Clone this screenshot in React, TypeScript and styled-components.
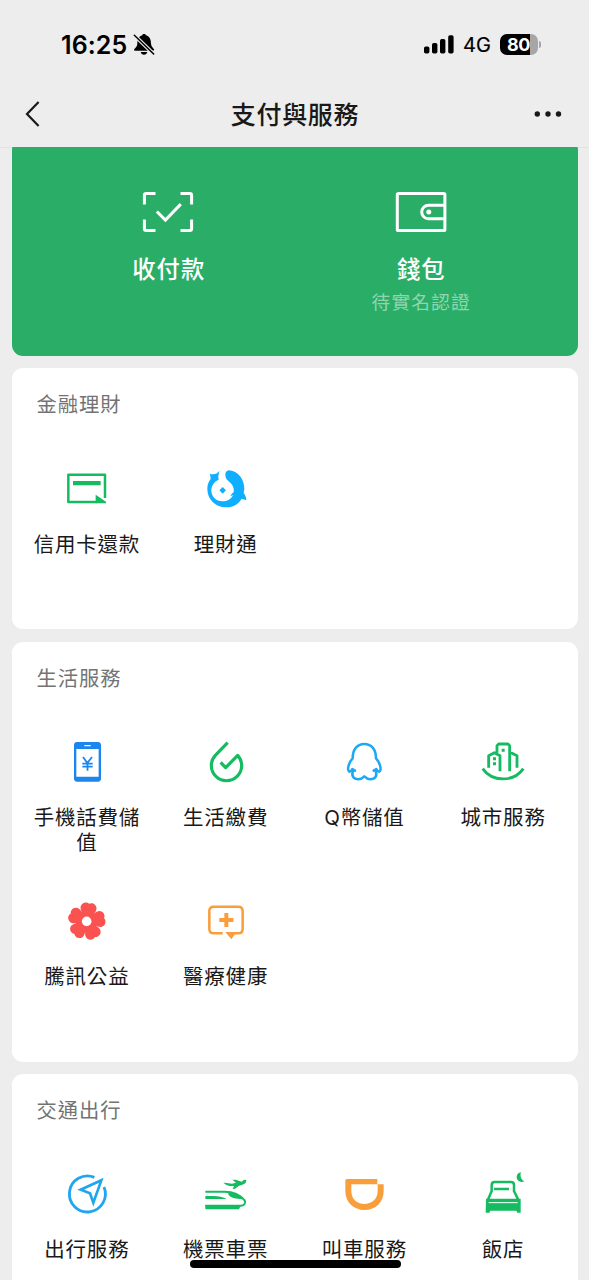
import React from "react";
import styled, { createGlobalStyle } from "styled-components";

const GlobalStyle = createGlobalStyle`
  *, *::before, *::after { box-sizing: border-box; }
  body {
    margin: 0;
    background: #ededed;
    font-family: Inter, "Noto Sans CJK TC", sans-serif;
    color: #191919;
  }
`;

const GREEN = "#14bb60";
const BLUE = "#10aeff";
const ORANGE = "#fa9d3b";

const Screen = styled.div`
  position: relative;
  width: 589px;
  height: 1280px;
  overflow: hidden;
  display: flex;
  flex-direction: column;
  background: #ededed;
`;

const StatusBar = styled.div`
  height: 82px;
  flex: none;
  padding: 7px 48px 0 61px;
  display: flex;
  align-items: center;
  justify-content: space-between;
  color: #000;
`;

const StatusGroup = styled.div`
  display: flex;
  align-items: center;
`;

const Clock = styled.span`
  font-size: 25px;
  font-weight: 600;
  line-height: 30px;
  letter-spacing: 0.1px;
  width: 72px;
`;

const Network = styled.span`
  font-size: 20px;
  line-height: 24px;
  margin: 1px 9px 0 9px;
  width: 28px;
  -webkit-text-stroke: 0.2px #000;
`;

const Battery = styled.div`
  width: 38px;
  height: 21px;
  border-radius: 7px;
  background: linear-gradient(to right, #000 30px, #a6a6a6 30px);
  color: #fff;
  font-size: 18px;
  font-weight: 700;
  line-height: 21px;
  padding-left: 7px;
  letter-spacing: -0.4px;
`;

const BatteryTip = styled.div`
  width: 2px;
  height: 7px;
  margin-left: 1px;
  border-radius: 0 3px 3px 0;
  background: #a6a6a6;
`;

const NavBar = styled.header`
  height: 65px;
  flex: none;
  padding: 0 27px 1px 24px;
  display: grid;
  grid-template-columns: 60px 1fr 60px;
  align-items: center;
  svg { display: block; }
  svg:last-child { justify-self: end; }
`;

const PageTitle = styled.h1`
  margin: 2px 0 0 4px;
  text-align: center;
  font-size: 25px;
  font-weight: 500;
  line-height: 32px;
  letter-spacing: 0.7px;
`;

const Content = styled.main`
  flex: 1;
  min-height: 0;
  overflow: hidden;
  box-shadow: inset 0 1px 0 #e2e2e2;
  padding: 0 11px 0 12px;
  display: flex;
  flex-direction: column;
  gap: 12.3px;
`;

const WalletCard = styled.section`
  flex: none;
  height: 217px;
  margin-top: -8px;
  padding: 49px 31px 0 30px;
  border-radius: 11px;
  background: #2aae67;
  color: #fff;
  display: grid;
  grid-template-columns: 1fr 1fr;
`;

const WalletItem = styled.div`
  display: flex;
  flex-direction: column;
  align-items: center;
  svg { display: block; }
`;

const WalletLabel = styled.div`
  margin-top: 18px;
  font-size: 23.3px;
  font-weight: 500;
  line-height: 32px;
  letter-spacing: 1px;
  margin-right: -1px;
`;

const WalletNote = styled.div`
  margin-top: 5px;
  font-size: 18.7px;
  line-height: 24px;
  letter-spacing: 1.2px;
  margin-right: -1px;
  color: #8fd5af;
`;

const Card = styled.section`
  flex: none;
  background: #fff;
  border-radius: 11px;
  padding: 25px 5.5px 5px;
`;

const CardTitle = styled.h2`
  margin: 0 0 47.5px 19px;
  font-size: 20.3px;
  font-weight: 400;
  line-height: 24px;
  letter-spacing: 1px;
  color: #737373;
`;

const Services = styled.div`
  display: grid;
  grid-template-columns: repeat(4, 1fr);
  grid-auto-rows: 159px;
  margin-bottom: 0.5px;
`;

const Service = styled.div`
  display: flex;
  flex-direction: column;
  align-items: center;
`;

const Glyph = styled.svg`
  display: block;
  width: 48px;
  height: 48px;
  flex: none;
`;

const ServiceLabel = styled.div`
  width: 110px;
  margin-top: 19px;
  text-align: center;
  font-size: 20.5px;
  line-height: 25px;
  letter-spacing: 0.8px;
`;

const HomeIndicator = styled.div`
  position: absolute;
  left: 190px;
  bottom: 12px;
  width: 211px;
  height: 8px;
  border-radius: 4px;
  background: #000;
`;

const BellOff = () => (
  <svg width="22" height="24" viewBox="0 0 66 72">
    <path d="M33 3c4 0 5 2 6 4 12 4 15 14 15 25 0 8 7 13 9 17 1 3-1 4-3 4H6c-2 0-4-2-2-5 4-5 9-8 9-16 0-11 3-21 15-25 0-2 1-4 5-4z" fill="#000" />
    <path d="M23 57h20c-1 5-5 8-10 8s-9-3-10-8z" fill="#000" />
    <path d="M2 5l62 60" stroke="#ededed" strokeWidth="11" />
    <path d="M4 7l58 56" stroke="#000" strokeWidth="4.5" strokeLinecap="round" />
  </svg>
);

const Signal = () => (
  <svg width="30" height="19" viewBox="0 0 30 19">
    <rect x="0" y="11.5" width="5.4" height="7" rx="1.8" />
    <rect x="8" y="8" width="5.4" height="10.5" rx="1.8" />
    <rect x="16" y="4" width="5.4" height="14.5" rx="1.8" />
    <rect x="24.2" y="0.3" width="5.4" height="18.2" rx="1.8" />
  </svg>
);

const CardIcon = () => (
  <Glyph viewBox="0 0 144 144" fill="none">
    <path d="M126 99V29H16v82h86" stroke={GREEN} strokeWidth="7.5" strokeLinejoin="round" />
    <path d="M30 48h83v13H30zM98 89l31 21v5H98z" fill={GREEN} />
  </Glyph>
);

const FishIcon = () => (
  <Glyph viewBox="0 0 144 144" fill={BLUE}>
    <path d="M70 28C70 20 76 16 82 16C110 19 127 45 127 72L125 84C130 90 133 98 133 106L119 101C110 116 95 127 73 127C40 127 16 103 16 72C16 58 20 50 26 42L24 26C35 30 45 27 53 17C49 27 48 36 50 44C38 49 28 60 28 76C28 96 43 109 61 109C75 109 88 102 93 90L85 94C87 88 90 85 95 82C97 68 91 58 80 49C72 43 70 36 70 28Z" />
    <rect x="55" y="69" width="14" height="14" rx="2" transform="rotate(45 62 76)" />
  </Glyph>
);

const PhoneIcon = () => (
  <Glyph viewBox="0 0 144 144">
    <path fillRule="evenodd" fill="#1d86ec" d="M41 12h65c4 0 8 4 8 8v103c0 4-4 8-8 8H41c-4 0-8-4-8-8V20c0-4 4-8 8-8zM40 33v83h67V33zM64 21v4h19v-4z" />
    <path d="M60 57l13 18 14-18M73.5 75v23M58 77h31M58 86h31" fill="none" stroke="#1d86ec" strokeWidth="5.5" />
  </Glyph>
);

const DropIcon = () => (
  <Glyph viewBox="0 0 144 144" fill="none" stroke={GREEN} strokeWidth="9.5">
    <path d="M77 14L40 52a45.500 45.500 0 1 0 67 0l-36 37-15-16" strokeLinejoin="round" />
  </Glyph>
);

const PenguinIcon = () => (
  <Glyph viewBox="0 0 144 144" fill="none" stroke="#1ba8f5" strokeWidth="7.5" strokeLinejoin="round" strokeLinecap="round">
    <path d="M45 98l-8-5c-3 6-6 9-9 8-8-5-2-27 10-40 0-25 12-43 35-43s35 18 35 43c12 13 18 35 10 40-3 1-6-2-9-8l-8 5" />
    <path d="M39 100c-6 14 2 24 16 24 8 0 13-4 18-9 5 5 10 9 18 9 14 0 22-10 16-24" />
  </Glyph>
);

const CityIcon = () => (
  <Glyph viewBox="0 0 144 144" fill="none" stroke={GREEN} strokeWidth="8.5">
    <path d="M29 89V53l17-9 17 9v47M54 44V23l5-5h28l5 5v77M92 42l22 11v36" strokeLinejoin="round" />
    <path d="M11 92c28 41 94 41 122 0" />
    <path d="M42 58h9v9h-9zM42 73h9v9h-9zM68 32h9v9h-9z" fill={GREEN} stroke="none" />
  </Glyph>
);

const FlowerIcon = () => (
  <Glyph viewBox="0 0 144 144" fill="#fa5151">
    <g transform="translate(71 73)">
      <circle r="33" />
      {[8, 80, 152, 224, 296].map((angle) => (
        <path
          key={angle}
          transform={`rotate(${angle})`}
          d="M0 0L-14 -20C-20 -27 -25 -34 -24 -42C-22 -55 -8 -59 0 -53C8 -59 22 -55 24 -42C25 -34 20 -27 14 -20Z"
        />
      ))}
      <circle r="14.5" fill="#fff" />
    </g>
  </Glyph>
);

const MedicalIcon = () => (
  <Glyph viewBox="0 0 144 144" fill="none">
    <path d="M62 109H35q-13 0-13-13V42q0-13 13-13h74q13 0 13 13v54q0 13-13 13H96" stroke={ORANGE} strokeWidth="7.5" />
    <path d="M67 48h12v15h15v12H79v15H67V75H52V63h15zM70 105h29v6l-11 16z" fill={ORANGE} />
  </Glyph>
);

const CompassIcon = () => (
  <Glyph viewBox="0 0 144 144" fill="none" stroke="#20a6ef" strokeWidth="8.5">
    <path d="M94 22A54 54 0 1 0 123 51" />
    <path d="M115 31L53 59l28 11 10 28z" strokeWidth="8" />
  </Glyph>
);

const TrainIcon = () => (
  <Glyph viewBox="0 0 144 144" fill="none">
    <path d="M10 65h58c27 0 47 10 60 26 5 9-2 16-12 16H10" stroke={GREEN} strokeWidth="6" />
    <path d="M10 78h23c18 0 30 3 41 9H10zM10 105h107l-6 13H10zM78 70c17-4 33 3 44 17-17 0-41-2-44-17zM68 38c8 0 15 3 22 3l12-3-11-9h10l18 6c3-2 5-6 9-6l5 1-2 9c-9 6-16 6-22 10l-10 7-7 1 4-9c-12 1-20 0-32-10z" fill={GREEN} />
  </Glyph>
);

const RideIcon = () => (
  <Glyph viewBox="0 0 144 144">
    <path fillRule="evenodd" fill={ORANGE} d="M21 27h91v16h19v20c0 34-24 57-57 57S16 97 16 63V32q0-5 5-5zM34 43v21c0 24 17 38 39 38s40-14 40-38V43z" />
  </Glyph>
);

const HotelIcon = () => (
  <Glyph viewBox="0 0 144 144" fill="none">
    <path d="M38 65V45q0-9 9-9h49q9 0 9 9v20M38 63L25 94M105 63l15 31M25 90h94" stroke={GREEN} strokeWidth="7.5" />
    <path d="M45 53h45v8H45zM21 86h8l2 7h84l2-7h8v42h-10l-3-6H34l-3 6H20zM126 7c-4 10 0 22 10 27-12 5-23-2-23-13 0-7 5-13 13-14z" fill={GREEN} />
    <path d="M29 98h87" stroke="#fff" strokeWidth="3" />
  </Glyph>
);

type ServiceEntry = { label: string; Icon: React.FC };

const sections: { title: string; items: ServiceEntry[] }[] = [
  {
    title: "金融理財",
    items: [
      { label: "信用卡還款", Icon: CardIcon },
      { label: "理財通", Icon: FishIcon },
    ],
  },
  {
    title: "生活服務",
    items: [
      { label: "手機話費儲值", Icon: PhoneIcon },
      { label: "生活繳費", Icon: DropIcon },
      { label: "Q幣儲值", Icon: PenguinIcon },
      { label: "城市服務", Icon: CityIcon },
      { label: "騰訊公益", Icon: FlowerIcon },
      { label: "醫療健康", Icon: MedicalIcon },
    ],
  },
  {
    title: "交通出行",
    items: [
      { label: "出行服務", Icon: CompassIcon },
      { label: "機票車票", Icon: TrainIcon },
      { label: "叫車服務", Icon: RideIcon },
      { label: "飯店", Icon: HotelIcon },
    ],
  },
];

export default function App() {
  return (
    <Screen>
      <GlobalStyle />
      <StatusBar>
        <StatusGroup>
          <Clock>16:25</Clock>
          <BellOff />
        </StatusGroup>
        <StatusGroup>
          <Signal />
          <Network>4G</Network>
          <Battery>80</Battery>
          <BatteryTip />
        </StatusGroup>
      </StatusBar>
      <NavBar>
        <svg width="18" height="28" viewBox="0 0 18 28" fill="none" stroke="#191919" strokeWidth="2.2">
          <path d="M14.6 2L3 14l11.6 12" />
        </svg>
        <PageTitle>支付與服務</PageTitle>
        <svg width="28" height="6" viewBox="0 0 28 6" fill="#191919">
          <circle cx="3.3" cy="3" r="2.7" />
          <circle cx="14" cy="3" r="2.7" />
          <circle cx="24.5" cy="3" r="2.7" />
        </svg>
      </NavBar>
      <Content>
        <WalletCard>
          <WalletItem>
            <svg width="52" height="48" viewBox="0 0 52 48" fill="none" stroke="#fff" strokeWidth="3">
              <path d="M13.5 5.4H4.2q-1.8 0-1.8 1.8v9.3M38.5 5.4h9.3q1.8 0 1.8 1.8v9.3M13.5 42.6H4.2q-1.8 0-1.8-1.8v-9.3M38.5 42.6h9.3q1.8 0 1.8-1.8v-9.3" />
              <path d="M14.8 23.5l8.6 8.6 15.4-16" />
            </svg>
            <WalletLabel>收付款</WalletLabel>
          </WalletItem>
          <WalletItem>
            <svg width="52" height="48" viewBox="0 0 52 48" fill="none" stroke="#fff" strokeWidth="3">
              <rect x="2.3" y="5.4" width="47.6" height="37.2" rx="1.2" />
              <path d="M50 17.2H33.5a6.8 6.8 0 0 0 0 13.6H50" />
              <circle cx="33.8" cy="24" r="2.5" fill="#fff" stroke="none" />
            </svg>
            <WalletLabel>錢包</WalletLabel>
            <WalletNote>待實名認證</WalletNote>
          </WalletItem>
        </WalletCard>
        {sections.map(({ title, items }) => (
          <Card key={title}>
            <CardTitle>{title}</CardTitle>
            <Services>
              {items.map(({ label, Icon }) => (
                <Service key={label}>
                  <Icon />
                  <ServiceLabel>{label}</ServiceLabel>
                </Service>
              ))}
            </Services>
          </Card>
        ))}
      </Content>
      <HomeIndicator />
    </Screen>
  );
}
